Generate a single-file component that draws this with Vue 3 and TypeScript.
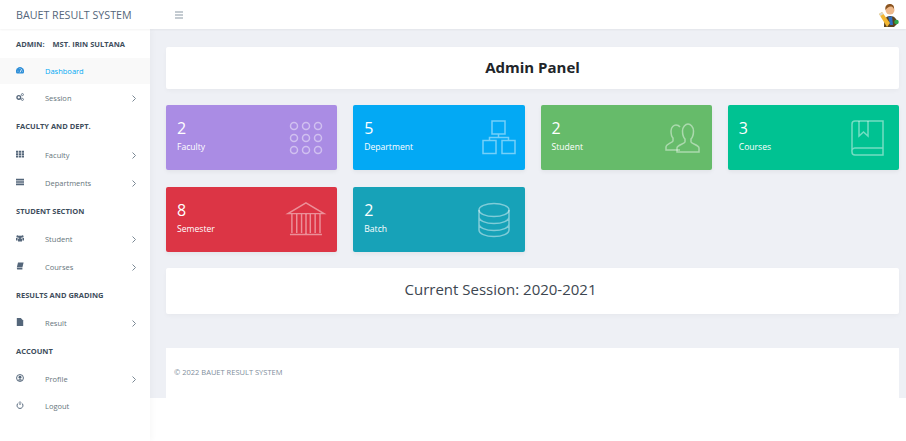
<script setup lang="ts">
type NavRow = { kind: "head" | "link"; label: string; icon?: string; arrow?: boolean; active?: boolean; tall?: boolean };

const nav: NavRow[] = [
  { kind: "link", label: "Dashboard", icon: "gauge", active: true },
  { kind: "link", label: "Session", icon: "cogs", arrow: true },
  { kind: "head", label: "FACULTY AND DEPT.", tall: true },
  { kind: "link", label: "Faculty", icon: "grid", arrow: true },
  { kind: "link", label: "Departments", icon: "bars", arrow: true },
  { kind: "head", label: "STUDENT SECTION" },
  { kind: "link", label: "Student", icon: "users", arrow: true },
  { kind: "link", label: "Courses", icon: "books", arrow: true },
  { kind: "head", label: "RESULTS AND GRADING" },
  { kind: "link", label: "Result", icon: "file", arrow: true },
  { kind: "head", label: "ACCOUNT" },
  { kind: "link", label: "Profile", icon: "user", arrow: true },
  { kind: "link", label: "Logout", icon: "power" },
];

const cards = [
  { value: 2, label: "Faculty", color: "#aa8ce4", icon: "dots" },
  { value: 5, label: "Department", color: "#03a9f4", icon: "tree" },
  { value: 2, label: "Student", color: "#66bb6a", icon: "people" },
  { value: 3, label: "Courses", color: "#00c292", icon: "book" },
  { value: 8, label: "Semester", color: "#dc3545", icon: "bank" },
  { value: 2, label: "Batch", color: "#17a2b8", icon: "db" },
];

const dots: number[][] = [];
for (const y of [6, 18, 30]) for (const x of [6, 18, 30]) dots.push([x, y]);
</script>

<template>
  <div class="page">
    <header class="topbar">
      <div class="brand">BAUET RESULT SYSTEM</div>
      <svg class="burger" width="8" height="8" viewBox="0 0 8 8">
        <path d="M0 1h8M0 4h8M0 7h8" stroke="#8a97a3" stroke-width="1.2" />
      </svg>
      <svg class="avatar" width="20" height="23" viewBox="0 0 20 23">
        <path d="M5 23c0-7 1-11 6-11s7 3 7 8l-3 3z" fill="#5c431f" />
        <path d="M9 12l2 1 2-1 1 9h-3z" fill="#2f6fc4" />
        <circle cx="11" cy="6" r="4.500" fill="#eeb98c" />
        <path d="M6.500 6c-1-5 2.500-6 4.500-6 3 0 4.500 2.500 4 5-1-2-2-2.500-3.500-2.500S8 4 6.500 6z" fill="#8a5420" />
        <path d="M0 10l3-2 8 11-3 4z" fill="#f2b632" />
        <path d="M0 10l3-2 1.500 2-3 2z" fill="#d8d8d0" />
        <circle cx="17.500" cy="18" r="2.300" fill="#2fa84a" />
      </svg>
    </header>

    <div class="shell">
      <aside class="sidebar">
        <div class="nav-head admin"><span>ADMIN:</span><span>MST. IRIN SULTANA</span></div>
        <template v-for="row in nav" :key="row.label">
          <div v-if="row.kind === 'head'" class="nav-head" :class="{ tall: row.tall }">{{ row.label }}</div>
          <div v-else class="nav-link" :class="{ active: row.active }">
            <svg class="nav-icon" width="8" height="8" viewBox="0 0 10 10">
              <template v-if="row.icon === 'gauge'">
                <path d="M1 9.500a5 5 0 1 1 8 0z" fill="currentColor" />
                <path d="M5 8l2-4" stroke="#fff" stroke-width="1" />
                <path d="M2 6.500h1M7.500 6.500h1M5 2.500v1" stroke="#fff" stroke-width=".8" />
              </template>
              <template v-else-if="row.icon === 'cogs'">
                <circle cx="3.500" cy="5.500" r="2.300" fill="none" stroke="currentColor" stroke-width="1.700" />
                <circle cx="8" cy="2" r="1.300" fill="none" stroke="currentColor" stroke-width="1" />
                <circle cx="8" cy="8" r="1.300" fill="none" stroke="currentColor" stroke-width="1" />
              </template>
              <path v-else-if="row.icon === 'grid'" d="M0 1h2.800v2.300H0zM3.600 1h2.800v2.300H3.600zM7.200 1H10v2.300H7.200zM0 4h2.800v2.300H0zM3.600 4h2.800v2.300H3.600zM7.200 4H10v2.300H7.200zM0 7h2.800v2.300H0zM3.600 7h2.800v2.300H3.600zM7.200 7H10v2.300H7.200z" fill="currentColor" />
              <path v-else-if="row.icon === 'bars'" d="M0 1h10v2H0zM0 4h10v2H0zM0 7h10v2H0z" fill="currentColor" />
              <path v-else-if="row.icon === 'users'" d="M2 1.500a1.500 1.500 0 1 1 0 3 1.500 1.500 0 0 1 0-3zM8 1.500a1.500 1.500 0 1 1 0 3 1.500 1.500 0 0 1 0-3zM5 2a2 2 0 1 1 0 4 2 2 0 0 1 0-4zM0 5h2v3H0zM8 5h2v3H8zM2.500 6h5v3.500h-5z" fill="currentColor" />
              <path v-else-if="row.icon === 'books'" d="M2.500 .5h7L8 7H1zM1 7.500h7V9.500H1.500z" fill="currentColor" />
              <path v-else-if="row.icon === 'file'" d="M1 0h5l3 3v7H1z" fill="currentColor" />
              <template v-else-if="row.icon === 'user'">
                <circle cx="5" cy="5" r="4.300" fill="none" stroke="currentColor" stroke-width="1.200" />
                <circle cx="5" cy="4" r="1.800" fill="currentColor" />
                <path d="M2 8c1-2 5-2 6 0z" fill="currentColor" />
              </template>
              <template v-else-if="row.icon === 'power'">
                <path d="M3 2.500a3.700 3.700 0 1 0 4 0" fill="none" stroke="currentColor" stroke-width="1.200" />
                <path d="M5 .5v4.500" stroke="currentColor" stroke-width="1.200" />
              </template>
            </svg>
            <span class="nav-label">{{ row.label }}</span>
            <svg v-if="row.arrow" class="chevron" width="4" height="7" viewBox="0 0 4 7">
              <path d="M.5 .5l3 3-3 3" fill="none" stroke="#7a8894" stroke-width="1" />
            </svg>
          </div>
        </template>
      </aside>

      <main class="main">
        <section class="panel title-panel"><h1>Admin Panel</h1></section>

        <section class="stats">
          <article v-for="card in cards" :key="card.label" class="stat" :style="{ background: card.color }">
            <div class="stat-text">
              <div class="stat-value">{{ card.value }}</div>
              <div class="stat-label">{{ card.label }}</div>
            </div>
            <svg class="stat-icon" width="36" height="36" viewBox="0 0 36 36" fill="none" stroke="currentColor" stroke-width="1.500">
              <template v-if="card.icon === 'dots'">
                <circle v-for="d in dots" :key="d.join()" :cx="d[0]" :cy="d[1]" r="3.500" />
              </template>
              <template v-else-if="card.icon === 'tree'">
                <path d="M16 1h13v13H16zM7 20.500h13v13H7zM26 20.500h13v13H26zM22.500 14v3.500M13.500 20.500v-3h19v3" />
              </template>
              <template v-else-if="card.icon === 'people'">
                <g transform="translate(2)">
                  <path d="M15 30H1v-3c0-3 6-4 7-6v-3c-2-2-2-4-2-7 0-4 3-6 5-6 2 0 3 .5 4 2" />
                  <path d="M12 32v-4c0-3 7-4 8-6v-3c-2-2-2.500-4-2.500-8 0-4 3-7 5.500-7s5.500 3 5.500 7c0 4-.5 6-2.500 8v3c1 2 8 3 8 6v4z" />
                </g>
              </template>
              <template v-else-if="card.icon === 'book'">
                <path d="M33 1H5a3 3 0 0 0-3 3v28a3 3 0 0 0 3 3h28zM2 32a3 3 0 0 1 3-4h28" />
                <path d="M9 1v15l4.500-4 4.500 4V1" />
              </template>
              <template v-else-if="card.icon === 'bank'">
                <path d="M0 12h37L18.500 1zM4 12v20M9 12v20M14 12v20M23 12v20M28 12v20M33 12v20M2 33.500h33" transform="scale(.97)" />
                <path d="M18 12v20" />
              </template>
              <template v-else>
                <ellipse cx="18" cy="8" rx="15" ry="6.500" />
                <path d="M3 8v20c0 3.500 6.500 6.500 15 6.500s15-3 15-6.500V8M3 15c0 3.500 6.500 6.500 15 6.500S33 18.500 33 15M3 22c0 3.500 6.500 6.500 15 6.500S33 25.500 33 22" />
              </template>
            </svg>
          </article>
        </section>

        <section class="panel session-panel">Current Session: 2020-2021</section>

        <footer class="panel footer">© 2022 BAUET RESULT SYSTEM</footer>
      </main>
    </div>
  </div>
</template>

<style scoped>
.page {
  width: 906px;
  height: 441px;
  overflow: hidden;
  background: #fff;
  font-family: "Open Sans", "Liberation Sans", sans-serif;
}

.topbar {
  display: flex;
  align-items: center;
  height: 29px;
  padding: 0 16px;
  background: #fff;
  box-shadow: 0 1px 2px rgba(0, 0, 0, 0.05);
  position: relative;
  z-index: 2;
}

.brand {
  width: 159px;
  font-size: 10.7px;
  color: #54667a;
}

.burger {
  margin-top: 1px;
}

.avatar {
  margin-left: auto;
  margin-right: -9px;
  margin-top: 1px;
}

.shell {
  display: flex;
  align-items: flex-start;
  height: 412px;
}

.sidebar {
  flex: 0 0 150px;
  height: 412px;
  background: #fff;
  box-shadow: 2px 0 6px rgba(0, 0, 0, 0.03);
  position: relative;
  z-index: 1;
}

.nav-head {
  display: flex;
  align-items: center;
  gap: 9px;
  height: 28px;
  padding-left: 16px;
  font-size: 7.5px;
  font-weight: 700;
  color: #3e4d5c;
}

.nav-head.tall {
  padding-bottom: 1px;
}

.admin {
  height: 29px;
  gap: 8px;
}

.nav-link {
  display: flex;
  align-items: center;
  height: 28px;
  padding: 0 14px 0 16px;
  font-size: 7.5px;
  color: #67757c;
}

.nav-link.active {
  height: 26px;
  background: #f9f9f9;
  color: #03a9f4;
}

.nav-link:last-child {
  height: 26px;
}

.nav-icon {
  flex: none;
  margin-top: -2px;
  color: #54667a;
}

.active .nav-icon {
  color: #2f8fd8;
}

.nav-label {
  margin-left: 21px;
}

.chevron {
  margin-left: auto;
  margin-right: 0;
}

.main {
  flex: 1;
  box-sizing: border-box;
  height: 369px;
  padding: 18px 7px 0 16px;
  background: #eef0f5;
}

.panel {
  background: #fff;
  border-radius: 2px;
  box-shadow: 0 2px 4px rgba(0, 0, 0, 0.03);
}

.title-panel {
  display: flex;
  align-items: center;
  justify-content: center;
  height: 42px;
  padding-bottom: 2px;
  box-sizing: border-box;
}

h1 {
  margin: 0;
  font-size: 15px;
  font-weight: 700;
  color: #212529;
}

.stats {
  display: grid;
  grid-template-columns: repeat(4, 1fr);
  grid-auto-rows: 65px;
  gap: 17px 16px;
  margin-top: 16px;
}

.stat {
  display: flex;
  align-items: center;
  justify-content: space-between;
  padding: 0 13px 0 11px;
  border-radius: 2px;
  box-shadow: 0 2px 4px rgba(0, 0, 0, 0.05);
  color: #fff;
}

.stat-text {
  padding-bottom: 5px;
}

.stat-value {
  font-size: 16px;
  line-height: 22px;
}

.stat-label {
  margin-top: 2px;
  font-size: 8.6px;
  line-height: 12px;
}

.stat-icon {
  color: rgba(255, 255, 255, 0.45);
  overflow: visible;
}

.session-panel {
  display: flex;
  align-items: center;
  justify-content: center;
  box-sizing: border-box;
  height: 46px;
  margin-top: 16px;
  padding: 0 64px 4px 0;
  font-size: 15px;
  color: #3c4650;
}

.footer {
  display: flex;
  align-items: center;
  box-sizing: border-box;
  height: 50px;
  margin-top: 34px;
  padding: 0 0 3px 8px;
  font-size: 7.5px;
  color: #7f8e9c;
  border-radius: 0;
  box-shadow: none;
}
</style>

<style>
html,
body {
  background: #fff;
  overflow: hidden;
}
</style>
